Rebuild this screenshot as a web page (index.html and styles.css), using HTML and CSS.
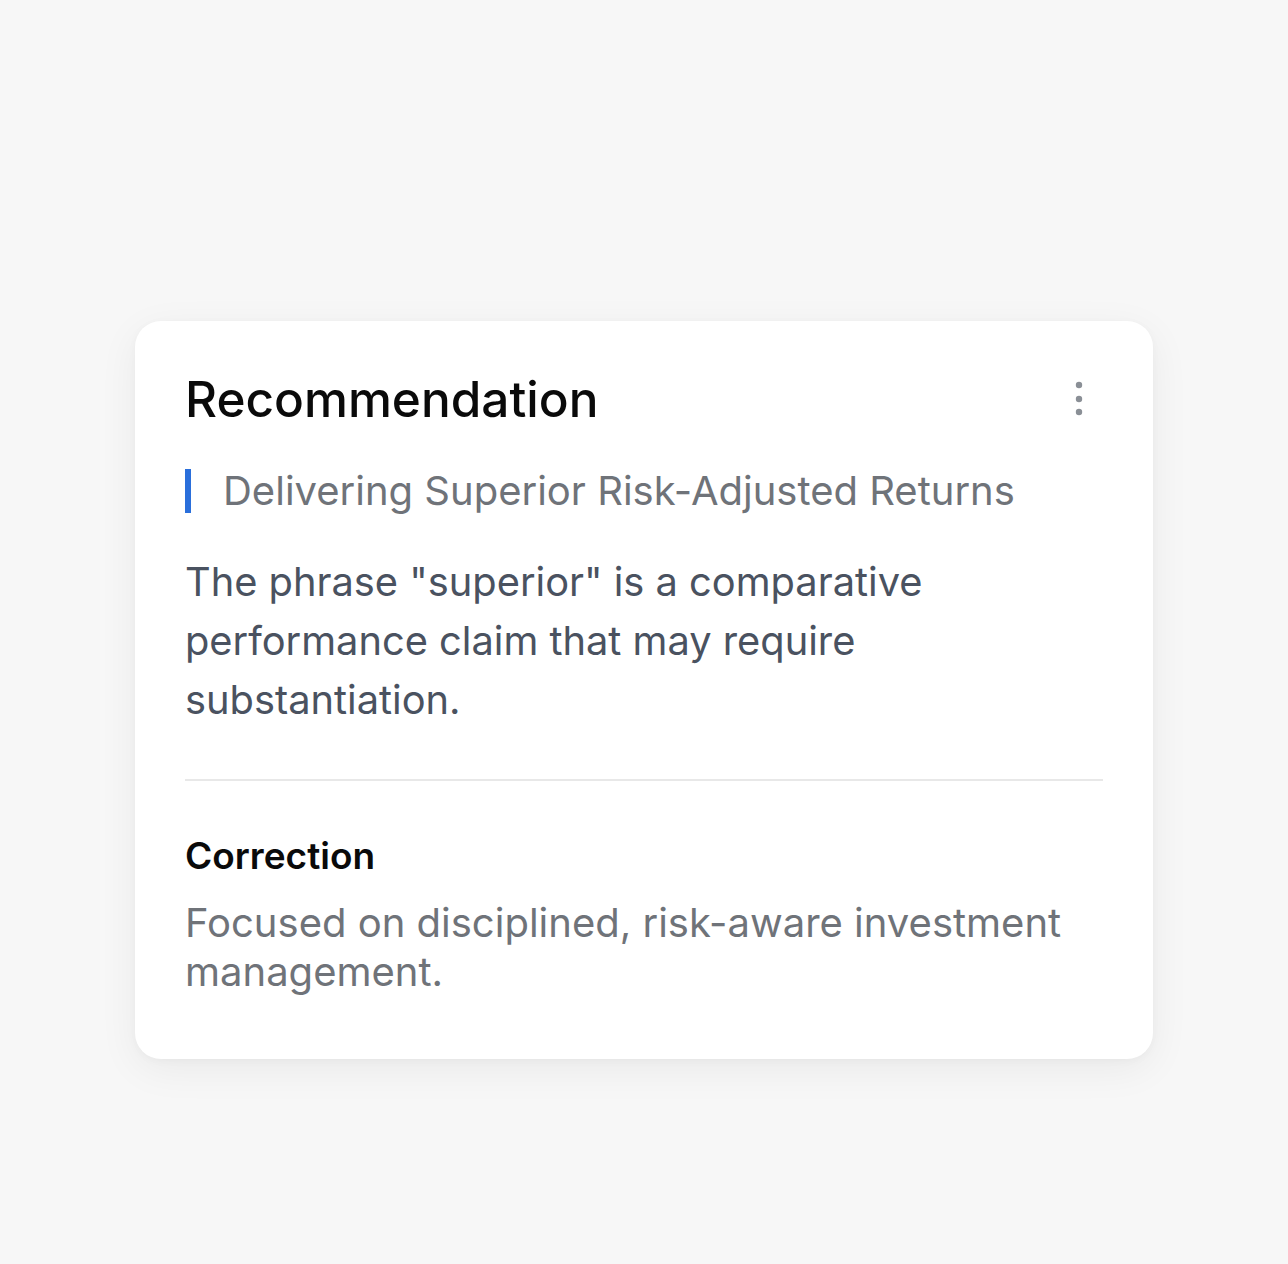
FILE: index.html
```html
<!DOCTYPE html>
<html lang="en">
<head>
<meta charset="utf-8">
<title>Recommendation</title>
<link rel="stylesheet" href="styles.css">
</head>
<body>
<main class="stage">
  <section class="card">
    <header class="card-head">
      <h1 class="title">Recommendation</h1>
      <button class="more" aria-label="More options">
        <svg width="8" height="36" viewBox="0 0 8 36"><circle cx="4" cy="4" r="3.2" fill="#8a8f96"/><circle cx="4" cy="18" r="3.2" fill="#8a8f96"/><circle cx="4" cy="31" r="3.2" fill="#8a8f96"/></svg>
      </button>
    </header>
    <blockquote class="quote">Delivering Superior Risk-Adjusted Returns</blockquote>
    <p class="body">The phrase "superior" is a comparative performance claim that may require substantiation.</p>
    <hr class="divider">
    <h2 class="sub">Correction</h2>
    <p class="correction">Focused on disciplined, risk-aware investment management.</p>
  </section>
</main>
</body>
</html>
```
FILE: styles.css
```css
* { box-sizing: border-box; }
html, body { margin: 0; padding: 0; }
body {
  background: #f7f7f7;
  font-family: Inter, "Noto Sans", "Liberation Sans", sans-serif;
  width: 1288px;
  height: 1264px;
}
.stage {
  padding: 321px 135px 0 135px;
}
.card {
  background: #ffffff;
  border-radius: 26px;
  box-shadow: 0 10px 40px rgba(0,0,0,0.06), 0 2px 8px rgba(0,0,0,0.03);
  padding: 48px 50px 63px 50px;
  width: 1018px;
}
.card-head {
  display: flex;
  justify-content: space-between;
  align-items: center;
}
.title {
  margin: 0;
  font-size: 49.5px;
  font-weight: 500;
  color: #0a0a0a;
  line-height: 60px;
}
.more {
  border: 0;
  background: none;
  padding: 0;
  margin-right: 20px;
  display: flex;
}
.quote {
  margin: 40px 0 0 0;
  padding-left: 32px;
  border-left: 6px solid #2a6fdb;
  font-size: 40px;
  color: #6f7379;
  line-height: 44px;
}
.body {
  margin: 39px 0 0 0;
  font-size: 39.8px;
  line-height: 59px;
  color: #4a5260;
}
.divider {
  border: 0;
  border-top: 2px solid #e8e8e8;
  margin: 50px 0 0 0;
}
.sub {
  margin: 53px 0 0 0;
  font-size: 37px;
  font-weight: 600;
  color: #0a0a0a;
  line-height: 44px;
}
.correction {
  margin: 20px 0 0 0;
  font-size: 40px;
  line-height: 49px;
  color: #6f7379;
}
```
